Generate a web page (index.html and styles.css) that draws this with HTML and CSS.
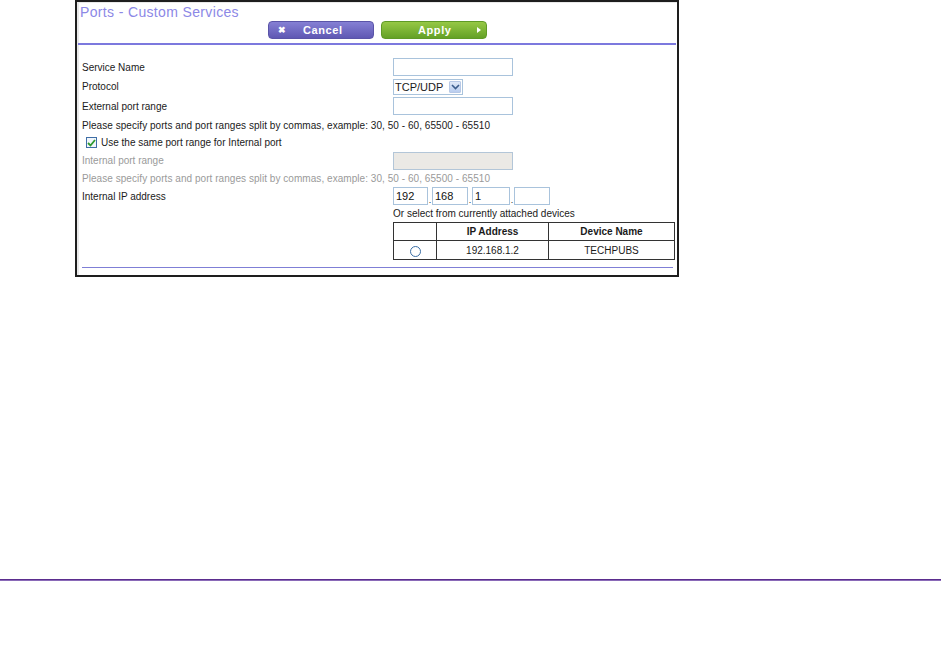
FILE: index.html
```html
<!DOCTYPE html>
<html>
<head>
<meta charset="utf-8">
<link rel="stylesheet" href="styles.css">
</head>
<body>
<div class="frame">
  <div class="title">Ports - Custom Services</div>
  <div class="buttons">
    <div class="btn cancel"><span class="ico">&#x2716;</span><span class="lbl">Cancel</span></div>
    <div class="btn apply"><span class="lbl">Apply</span><span class="ico tri"></span></div>
  </div>
  <div class="rule"></div>
  <div class="form">
    <div class="row r-svc"><div class="label">Service Name</div><div class="field"><div class="input wide"></div></div></div>
    <div class="row r-proto"><div class="label">Protocol</div><div class="field"><div class="select"><span class="sel-text">TCP/UDP</span><span class="sel-arrow"><svg width="9" height="6" viewBox="0 0 9 6"><path d="M1 1 L4.5 4.5 L8 1" fill="none" stroke="#3c5d8c" stroke-width="1.6"/></svg></span></div></div></div>
    <div class="row r-ext"><div class="label">External port range</div><div class="field"><div class="input wide"></div></div></div>
    <div class="row r-note"><div class="note">Please specify ports and port ranges split by commas, example: 30, 50 - 60, 65500 - 65510</div></div>
    <div class="row r-check"><span class="checkbox"><svg width="9" height="8" viewBox="0 0 9 8"><path d="M1 4 L3.5 6.5 L8 1" fill="none" stroke="#2e9a2e" stroke-width="1.8"/></svg></span><span class="check-label">Use the same port range for Internal port</span></div>
    <div class="row r-int"><div class="label grey">Internal port range</div><div class="field"><div class="input wide disabled"></div></div></div>
    <div class="row r-note2"><div class="note grey">Please specify ports and port ranges split by commas, example: 30, 50 - 60, 65500 - 65510</div></div>
    <div class="row r-ip"><div class="label">Internal IP address</div><div class="field ip">
      <div class="input oct o1">192</div><span class="dot">.</span>
      <div class="input oct o2">168</div><span class="dot">.</span>
      <div class="input oct o3">1</div><span class="dot">.</span>
      <div class="input oct o4"></div>
    </div></div>
    <div class="row r-or"><div class="label"></div><div class="field">Or select from currently attached devices</div></div>
    <div class="row r-table"><div class="label"></div>
      <table class="devices">
        <tr><th class="c1"></th><th class="c2">IP Address</th><th class="c3">Device Name</th></tr>
        <tr><td class="c1"><span class="radio"></span></td><td>192.168.1.2</td><td>TECHPUBS</td></tr>
      </table>
    </div>
  </div>
  <div class="bottom-rule"></div>
</div>
<div class="page-rule"></div>
</body>
</html>
```

FILE: styles.css
```css
html, body {
  margin: 0;
  padding: 0;
  background: #ffffff;
}
body {
  font-family: "Liberation Sans", Arial, sans-serif;
  font-size: 10px;
  color: #1a1a1a;
  width: 941px;
  height: 648px;
  overflow: hidden;
}
.frame {
  margin-left: 75px;
  width: 600px;
  height: 273px;
  border: 2px solid #1e1e1e;
  box-sizing: content-box;
  position: relative;
  background: #fff;
  box-shadow: inset 2px 1px 0 #e9e9e9;
}
.title {
  padding-left: 3px;
  padding-top: 2px;
  height: 17px;
  font-size: 14px;
  line-height: 16px;
  letter-spacing: 0.35px;
  color: #8c88e6;
}
.buttons {
  display: flex;
  justify-content: center;
  gap: 7px;
  height: 18px;
  padding-left: 1px;
}
.btn {
  width: 106px;
  height: 18px;
  border-radius: 4px;
  box-sizing: border-box;
  display: flex;
  align-items: center;
  color: #fff;
  font-weight: bold;
  font-size: 11px;
  letter-spacing: 0.6px;
  position: relative;
}
.cancel {
  background: linear-gradient(#8580d4, #5f58b3);
  border: 1px solid #5a54a8;
}
.apply {
  background: linear-gradient(#96c845, #64a126);
  border: 1px solid #5f9a26;
}
.cancel .ico {
  font-size: 9px;
  margin-left: 9px;
  width: 22px;
}
.cancel .lbl {
  margin-left: 3px;
}
.apply .lbl {
  margin-left: 36px;
}
.tri {
  width: 0;
  height: 0;
  border-left: 4px solid #fff;
  border-top: 3px solid transparent;
  border-bottom: 3px solid transparent;
  margin-left: 25px;
}
.rule {
  margin-top: 4px;
  margin-left: 1px;
  margin-right: 1px;
  height: 2px;
  background: #7c79de;
}
.form {
  padding-top: 12px;
  padding-left: 5px;
}
.row {
  display: flex;
  align-items: center;
}
.label {
  width: 311px;
  flex: none;
}
.grey {
  color: #9a9a9a;
}
.field {
  display: flex;
  align-items: center;
}
.input {
  height: 18px;
  box-sizing: border-box;
  border: 1px solid #a9c3dc;
  background: #fff;
  font-size: 11px;
  line-height: 16px;
  padding-left: 2px;
  color: #111;
}
.wide {
  width: 120px;
}
.disabled {
  background: #ebe9e5;
  border-color: #b3c6d8;
}
.r-svc { height: 20px; }
.r-proto { height: 19px; }
.r-ext { height: 20px; }
.r-note { height: 18px; }
.r-check { height: 17px; }
.r-int { height: 19px; }
.r-note2 { height: 17px; }
.r-ip { height: 18px; }
.r-or { height: 17px; }
.r-table { align-items: flex-start; }
.note {
  letter-spacing: 0.05px;
}
.select {
  width: 70px;
  height: 16px;
  box-sizing: border-box;
  border: 1px solid #a9c3dc;
  display: flex;
  align-items: center;
  justify-content: space-between;
  font-size: 11px;
  padding-left: 1px;
  padding-right: 1px;
}
.sel-arrow {
  width: 12px;
  height: 12px;
  background: linear-gradient(#dfe8f7, #b9cdef);
  border: 1px solid #b7c8e6;
  box-sizing: border-box;
  display: flex;
  align-items: center;
  justify-content: center;
  border-radius: 1px;
}
.checkbox {
  width: 11px;
  height: 11px;
  box-sizing: border-box;
  border: 1px solid #3f6ea6;
  background: #f2f6fb;
  margin-left: 4px;
  margin-right: 4px;
  display: flex;
  align-items: center;
  justify-content: center;
}
.check-label {
  font-size: 10px;
}
.oct {
  font-size: 11px;
}
.o1 { width: 35px; }
.o2 { width: 36px; }
.o3 { width: 38px; }
.o4 { width: 36px; }
.dot {
  width: 4px;
  text-align: center;
  align-self: flex-end;
  line-height: 10px;
  font-size: 9px;
}
.devices {
  border-collapse: collapse;
  width: 282px;
  font-size: 10px;
}
.devices th, .devices td {
  border: 1.5px solid #333;
  text-align: center;
  padding: 0;
}
.devices th {
  height: 17px;
  font-weight: bold;
}
.devices td {
  height: 18px;
}
.c1 { width: 42px; }
.c2 { width: 111px; }
.radio {
  display: inline-block;
  width: 9px;
  height: 9px;
  border: 1px solid #3a6ea5;
  border-radius: 50%;
  vertical-align: middle;
  margin-top: 3px;
}
.bottom-rule {
  margin-top: 7px;
  margin-left: 5px;
  margin-right: 4px;
  height: 1px;
  background: #7f7fd6;
}
.page-rule {
  margin-top: 302px;
  height: 1px;
  background: #5b2d8e;
  border-bottom: 0.5px solid #8a6ab8;
}
```
